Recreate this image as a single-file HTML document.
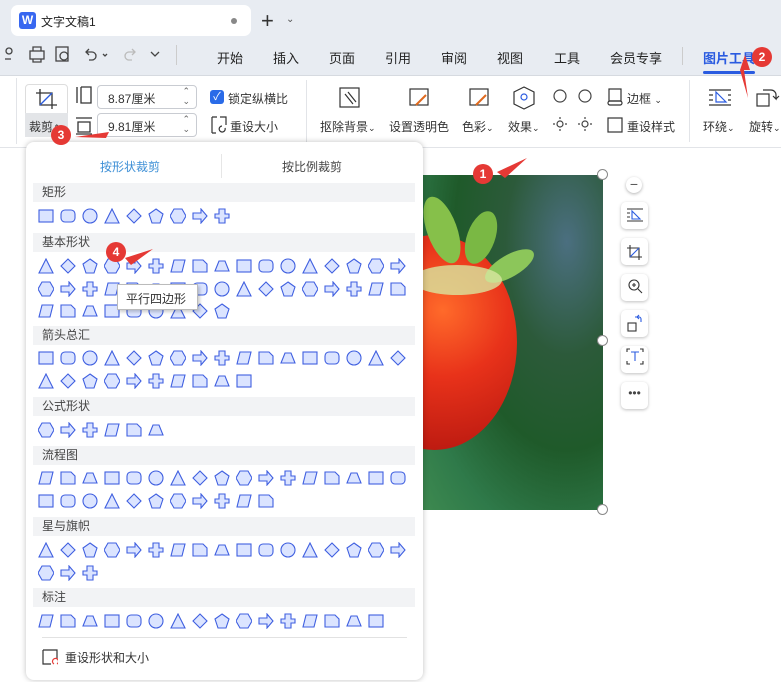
<!DOCTYPE html>
<html><head><meta charset="utf-8">
<style>
*{margin:0;padding:0;box-sizing:border-box}
body{width:781px;height:682px;overflow:hidden;background:#fff;font-family:"Liberation Sans","Noto Sans CJK SC",sans-serif;font-size:13px;color:#333;position:relative}
div,span{white-space:nowrap}
.abs{position:absolute}
.top{left:0;top:0;width:781px;height:75px;background:#e8ecf2}
.tab{left:11px;top:5px;width:240px;height:31px;background:#fff;border-radius:7px}
.menu span{position:absolute;top:48px;font-size:13px;color:#222}
.ribbon{left:0;top:75px;width:781px;height:73px;background:#fff;border-top:1px solid #d6dae0;border-bottom:1px solid #e2e4e8}
.rt{font-size:12px;color:#333;position:absolute}
.inp{position:absolute;width:100px;height:24px;border:1px solid #c9ccd2;border-radius:4px;font-size:12px;padding:4px 0 0 10px}
.panel{left:26px;top:142px;width:397px;height:538px;background:#fff;border-radius:8px;box-shadow:0 0 6px rgba(0,0,0,.25)}
.hd{position:absolute;left:7px;width:382px;height:19px;background:#f2f3f5;font-size:12px;color:#444;padding-left:9px;line-height:19px}
.ic{position:absolute;width:16px;height:16px}
.badge{position:absolute;width:20px;height:20px;border-radius:50%;background:#e53935;color:#fff;font-size:12px;font-weight:bold;text-align:center;line-height:20px}
.side{position:absolute;left:621px;width:27px;height:27px;background:#fff;border-radius:5px;box-shadow:0 1px 3px rgba(0,0,0,.25)}
.h{position:absolute;width:11px;height:11px;border-radius:50%;background:#fff;border:1px solid #888}
</style></head><body>
<div class="abs top"></div>
<div class="abs tab"></div>
<div class="abs" style="left:19px;top:12px;width:17px;height:17px;background:#3867f0;border-radius:3px;color:#fff;font-weight:bold;font-size:12px;text-align:center;line-height:17px">W</div>
<div class="abs" style="left:41px;top:13px;font-size:12px;color:#222">文字文稿1</div>
<div class="abs" style="left:231px;top:18px;width:6px;height:6px;border-radius:50%;background:#888"></div>
<div class="abs" style="left:261px;top:8px;font-size:22px;color:#333">+</div>
<div class="abs" style="left:286px;top:14px;font-size:10px;color:#555">⌄</div>
<svg class="abs" style="left:3px;top:45px" width="160" height="20" fill="none" stroke="#444" stroke-width="1.3">
<circle cx="6" cy="6" r="3"/><path d="M2 14h6"/>
<rect x="27" y="6" width="14" height="8"/><path d="M30 6V2h8v4M30 14v3h8v-3"/>
<rect x="53" y="2" width="12" height="14"/><circle cx="61" cy="11" r="4"/>
<path d="M86 4l-3 3 3 3M83 7h6a4 4 0 0 1 0 8h-3"/><path d="M100 9l2 2 2-2"/>
<path d="M129 4l3 3-3 3M132 7h-6a4 4 0 0 0 0 8h3" stroke="#bbb"/><path d="M148 7l4 4 4-4"/>
</svg>
<div class="abs" style="left:176px;top:45px;width:1px;height:20px;background:#ccc"></div>
<div class="menu">
<span style="left:217px">开始</span><span style="left:273px">插入</span><span style="left:329px">页面</span><span style="left:385px">引用</span><span style="left:441px">审阅</span><span style="left:497px">视图</span><span style="left:554px">工具</span><span style="left:610px">会员专享</span>
<span style="left:703px;color:#2a5be0;font-weight:bold">图片工具</span></div>
<div class="abs" style="left:682px;top:47px;width:1px;height:18px;background:#ccc"></div>
<div class="abs" style="left:703px;top:71px;width:52px;height:3px;background:#2a5be0;border-radius:2px"></div>
<div class="abs ribbon"></div>
<div class="abs" style="left:16px;top:78px;width:1px;height:66px;background:#e2e4e8"></div>
<div class="abs" style="left:25px;top:84px;width:43px;height:53px;border:1px solid #ddd;border-radius:4px"></div>
<div class="abs" style="left:25px;top:113px;width:43px;height:24px;background:#e3e5e8"></div>
<svg class="abs" style="left:35px;top:88px" width="24" height="22" fill="none" stroke="#333" stroke-width="1.3"><path d="M5 1v16h17M1 5h16v16"/><path d="M5 17L17 5" stroke="#2a5be0"/></svg>
<div class="rt" style="left:29px;top:118px">裁剪<span style="font-size:9px">⌃</span></div>
<svg class="abs" style="left:75px;top:86px" width="20" height="50" fill="none" stroke="#333" stroke-width="1.3"><path d="M2 1v16M6 1v16h10V1H6"/><path d="M1 32h16M1 48h16M3 36h12v10H3z"/></svg>
<div class="inp" style="left:97px;top:85px">8.87厘米<span style="position:absolute;right:6px;top:0;font-size:9px;color:#666;line-height:10px">⌃<br>⌄</span></div>
<div class="inp" style="left:97px;top:113px">9.81厘米<span style="position:absolute;right:6px;top:0;font-size:9px;color:#666;line-height:10px">⌃<br>⌄</span></div>
<div class="abs" style="left:210px;top:90px;width:14px;height:14px;background:#2a6be8;border-radius:3px;color:#fff;font-size:11px;text-align:center;line-height:14px">✓</div>
<div class="rt" style="left:228px;top:90px">锁定纵横比</div>
<svg class="abs" style="left:210px;top:116px" width="18" height="18" fill="none" stroke="#333" stroke-width="1.2"><path d="M2 1v16M2 1h5M2 17h4M10 1h6v8"/><path d="M15 12a3 3 0 1 1-3-2" stroke="#333"/></svg>
<div class="rt" style="left:230px;top:118px">重设大小</div>
<div class="abs" style="left:306px;top:80px;width:1px;height:62px;background:#e2e4e8"></div>
<svg class="abs" style="left:338px;top:86px" width="24" height="24" fill="none" stroke="#333" stroke-width="1.2"><rect x="2" y="2" width="19" height="19"/><path d="M7 8l8 10M10 6l8 10"/></svg>
<div class="rt" style="left:320px;top:118px">抠除背景<span style="font-size:9px">⌄</span></div>
<svg class="abs" style="left:408px;top:86px" width="24" height="24" fill="none" stroke="#333" stroke-width="1.2"><rect x="2" y="3" width="18" height="16"/><path d="M8 19l10-10" stroke="#e06a1e" stroke-width="2"/></svg>
<div class="rt" style="left:389px;top:118px">设置透明色</div>
<svg class="abs" style="left:468px;top:86px" width="24" height="24" fill="none" stroke="#333" stroke-width="1.2"><rect x="2" y="3" width="18" height="16"/><path d="M8 19l10-10" stroke="#e06a1e" stroke-width="2"/></svg>
<div class="rt" style="left:462px;top:118px">色彩<span style="font-size:9px">⌄</span></div>
<svg class="abs" style="left:512px;top:86px" width="24" height="24" fill="none" stroke="#333" stroke-width="1.2"><path d="M12 1l10 5v12l-10 5-10-5V6z"/><circle cx="12" cy="11" r="3" stroke="#2a5be0"/></svg>
<div class="rt" style="left:508px;top:118px">效果<span style="font-size:9px">⌄</span></div>
<svg class="abs" style="left:551px;top:86px" width="50" height="50" fill="none" stroke="#444" stroke-width="1.2"><circle cx="9" cy="10" r="6"/><circle cx="34" cy="10" r="6"/><circle cx="9" cy="38" r="3"/><circle cx="34" cy="38" r="3"/><path d="M9 31v2M9 43v2M2 38h2M14 38h2M34 31v2M34 43v2M27 38h2M39 38h2"/></svg>
<svg class="abs" style="left:606px;top:88px" width="20" height="46" fill="none" stroke="#333" stroke-width="1.2"><rect x="3" y="1" width="12" height="12"/><rect x="2" y="13" width="14" height="4" rx="2"/><rect x="2" y="30" width="14" height="14"/></svg>
<div class="rt" style="left:627px;top:90px">边框 <span style="font-size:9px">⌄</span></div>
<div class="rt" style="left:627px;top:118px">重设样式</div>
<div class="abs" style="left:689px;top:80px;width:1px;height:62px;background:#e2e4e8"></div>
<svg class="abs" style="left:708px;top:88px" width="24" height="20" fill="none" stroke="#333" stroke-width="1.2"><path d="M1 2h22M1 7h4M1 12h4M1 17h22M20 7h3M20 12h3"/><path d="M8 4l10 10H8z" stroke="#2a5be0"/></svg>
<div class="rt" style="left:703px;top:118px">环绕<span style="font-size:9px">⌄</span></div>
<svg class="abs" style="left:755px;top:86px" width="26" height="24" fill="none" stroke="#333" stroke-width="1.2"><rect x="2" y="8" width="12" height="12"/><path d="M8 4h8a5 5 0 0 1 5 5v4l-3-3M21 13l3-3"/></svg>
<div class="rt" style="left:749px;top:118px">旋转<span style="font-size:9px">⌄</span></div>

<div class="abs" style="left:422px;top:175px;width:181px;height:335px;overflow:hidden;background:radial-gradient(ellipse at 80% 20%,#4b6f80 0%,#2c5a3a 30%,#1f5a2a 55%,#2f7a4a 80%,#3e8a50 100%)">
<div class="abs" style="left:-70px;top:60px;width:165px;height:215px;border-radius:50%;background:radial-gradient(circle at 55% 35%,#ff6a2a 0%,#e8321a 40%,#b81810 90%)"></div>
<div class="abs" style="left:5px;top:20px;width:30px;height:70px;border-radius:50%;background:#86c04a;transform:rotate(-20deg)"></div>
<div class="abs" style="left:45px;top:35px;width:28px;height:55px;border-radius:50%;background:#7ab844;transform:rotate(20deg)"></div>
<div class="abs" style="left:60px;top:80px;width:55px;height:22px;border-radius:50%;background:#8cc65a;transform:rotate(-30deg)"></div>
<div class="abs" style="left:-10px;top:90px;width:90px;height:30px;border-radius:50%;background:#d8e6a0;opacity:.8"></div>
</div>
<div class="h" style="left:597px;top:169px"></div>
<div class="h" style="left:597px;top:335px"></div>
<div class="h" style="left:597px;top:504px"></div>
<div class="abs" style="left:626px;top:177px;width:16px;height:16px;border-radius:50%;background:#fff;box-shadow:0 1px 3px rgba(0,0,0,.3);text-align:center;line-height:15px;font-size:14px;color:#555">−</div>
<div class="side" style="top:202px"></div><div class="side" style="top:238px"></div><div class="side" style="top:274px"></div><div class="side" style="top:310px"></div><div class="side" style="top:346px"></div><div class="side" style="top:382px;text-align:center;line-height:22px;font-size:12px;color:#444">•••</div>
<svg class="abs" style="left:626px;top:207px" width="18" height="160" fill="none" stroke="#333" stroke-width="1.1"><path d="M1 2h16M1 6h3M1 10h3M1 14h16"/><path d="M6 4l8 8H6z" stroke="#2a5be0"/><path d="M4 38v12h12M1 41h12v12"/><path d="M4 50l9-9" stroke="#2a5be0"/><circle cx="8" cy="78" r="5"/><path d="M12 82l4 4M6 78h4M8 76v4"/><rect x="2" y="116" width="8" height="8"/><path d="M9 110h4a2 2 0 0 1 2 2v3M13 108l-2 2 2 2" stroke="#2a5be0"/><path d="M1 145v-3h3M14 142h3v3M1 154v3h3M14 157h3v-3"/><path d="M5 145h8M9 145v9" stroke="#2a5be0"/></svg>

<div class="abs panel" id="p">
<div class="abs" style="left:74px;top:16px;font-size:12px;color:#3d8fd6">按形状裁剪</div>
<div class="abs" style="left:195px;top:12px;width:1px;height:24px;background:#e6e6e6"></div>
<div class="abs" style="left:256px;top:16px;font-size:12px;color:#444">按比例裁剪</div>
<div class="hd" style="top:41px">矩形</div>
<div class="hd" style="top:91px">基本形状</div>
<div class="hd" style="top:184px">箭头总汇</div>
<div class="hd" style="top:255px">公式形状</div>
<div class="hd" style="top:304px">流程图</div>
<div class="hd" style="top:375px">星与旗帜</div>
<div class="hd" style="top:446px">标注</div>
<div class="abs" style="left:16px;top:495px;width:365px;height:1px;background:#e2e2e2"></div>
<svg class="abs" style="left:16px;top:507px" width="16" height="16" fill="none" stroke="#333" stroke-width="1.2"><path d="M1 1h14v9M1 1v14h8"/><path d="M15 15a3 3 0 1 0-3 0" stroke="#e53935"/></svg>
<div class="abs" style="left:39px;top:507px;font-size:12px;color:#333">重设形状和大小</div>
<div id="icons"></div>
</div>
<div class="abs" style="left:117px;top:284px;width:81px;height:26px;background:#fff;border:1px solid #bbb;box-shadow:2px 2px 3px rgba(0,0,0,.2);font-size:12px;padding:5px 0 0 8px;color:#333">平行四边形</div>

<svg class="abs" style="left:0;top:0" width="781" height="682" pointer-events="none">
<path d="M497 172l30-14-22 20z" fill="#e53935"/>
<path d="M748 98l-8 -28 4 0z M745 55l5 15h-10z" fill="#e53935"/>
<path d="M75 137l34-5-3 6z" fill="#e53935"/>
<path d="M125 258l28-9-22 16z" fill="#e53935"/>
</svg>
<div class="badge" style="left:473px;top:164px">1</div>
<div class="badge" style="left:752px;top:47px">2</div>
<div class="badge" style="left:51px;top:125px">3</div>
<div class="badge" style="left:106px;top:242px">4</div>

<script>
var rows=[[66,9],[116,17],[139,17],[161,9],[208,17],[231,10],[280,6],[328,17],[351,11],[400,17],[423,3],[471,16]];
var S=['<rect x="1" y="2" width="14" height="12"/>','<rect x="1" y="2" width="14" height="12" rx="4"/>','<circle cx="8" cy="8" r="7"/>','<path d="M8 1l7 14H1z"/>','<path d="M8 1l7 7-7 7-7-7z"/>','<path d="M8 1l7 5-3 9H4L1 6z"/>','<path d="M4 1h8l4 7-4 7H4L0 8z"/>','<path d="M1 5h8V1l6 7-6 7v-4H1z"/>','<path d="M5 1h6v5h4v4h-4v5H5v-5H1V6h4z"/>','<path d="M4 2h11l-3 12H1z"/>','<path d="M1 2h10l4 4v8H1z"/>','<path d="M5 3h6l4 10H1z"/>'];
var h='';rows.forEach(function(r,ri){for(var i=0;i<r[1];i++){var s=S[(i+ri*3)%S.length];h+='<svg class="ic" style="left:'+(12+i*22)+'px;top:'+r[0]+'px" viewBox="0 0 16 16"><g fill="#dbe4ff" stroke="#3f5fe0" stroke-width="1.1">'+s+'</g></svg>';}});
document.getElementById('icons').innerHTML=h;
</script>
</body></html>
